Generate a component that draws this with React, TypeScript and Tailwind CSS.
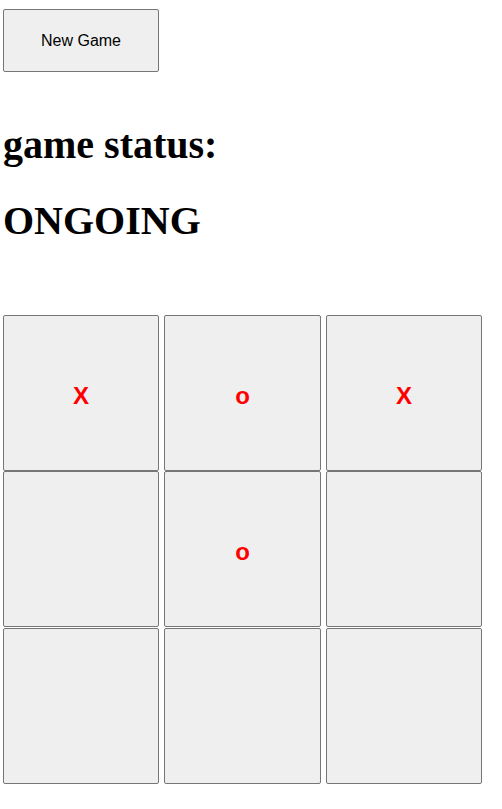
import { useState } from 'react';

const initialBoard = ['X', 'o', 'X', '', 'o', '', '', '', ''];

export default function App() {
  const [board, setBoard] = useState<string[]>(initialBoard);

  return (
    <div className="bg-white min-h-[809px] pl-[3px] pt-[9px]">
      <button
        className="block w-[156px] h-[63px] bg-[#efefef] border border-[#767676] rounded-[2px] text-[16px] text-black font-['Liberation_Sans',Arial,sans-serif]"
        onClick={() => setBoard(Array(9).fill(''))}
      >
        New Game
      </button>
      <h1 className="mt-[50px] text-[40px] leading-[46px] font-bold text-black font-['Liberation_Serif','Times_New_Roman',serif]">
        game status:
      </h1>
      <h1 className="mt-[30px] text-[40px] leading-[46px] font-bold text-black font-['Liberation_Serif','Times_New_Roman',serif]">
        ONGOING
      </h1>
      <div className="mt-[71px] grid grid-cols-[156px_157px_156px] grid-rows-[156px_157px_156px] gap-x-[5px] w-max">
        {board.map((cell, i) => (
          <button
            key={i}
            className="h-[156px] pt-[6px] bg-[#efefef] border border-[#767676] rounded-[2px] flex items-center justify-center text-[24px] font-bold text-[#ff0000] font-['Liberation_Sans',Arial,sans-serif]"
          >
            {cell}
          </button>
        ))}
      </div>
    </div>
  );
}
